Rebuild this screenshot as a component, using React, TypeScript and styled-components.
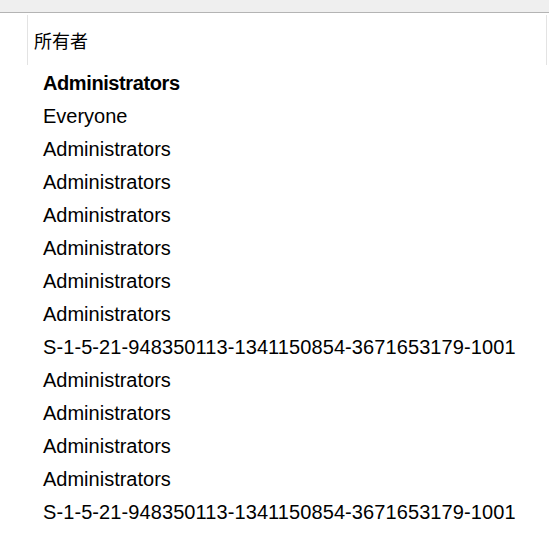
import React from "react";
import styled, { createGlobalStyle } from "styled-components";

const Global = createGlobalStyle`
  html, body { margin: 0; padding: 0; background: #ffffff; }
  body { font-family: "Liberation Sans", "Noto Sans CJK SC", sans-serif; color: #000; }
`;

const Page = styled.div`
  width: 549px;
  height: 539px;
  display: flex;
  flex-direction: column;
  background: #fff;
  overflow: hidden;
`;

const TopBar = styled.div`
  height: 12px;
  background: #efefef;
  border-bottom: 1px solid #b4b4b4;
  flex-shrink: 0;
`;

const HeaderRow = styled.div`
  display: flex;
  padding: 2px 2px 0 27px;
  height: 50px;
  flex-shrink: 0;
`;

const HeaderCell = styled.div`
  flex: 1;
  display: flex;
  align-items: center;
  padding-left: 6px;
  border-left: 1px solid #e3e3e3;
  border-right: 1px solid #e3e3e3;
  font-family: "Noto Sans CJK SC", "Noto Sans", sans-serif;
  font-size: 18px;
  padding-bottom: 1px;
`;

const List = styled.div`
  display: flex;
  flex-direction: column;
  padding: 2px 0 0 43px;
`;

const Item = styled.div<{ $bold?: boolean; $sid?: boolean }>`
  height: 33px;
  line-height: 33px;
  font-size: 20px;
  font-weight: ${(p) => (p.$bold ? 700 : 400)};
  letter-spacing: ${(p) => (p.$bold ? "-0.4px" : p.$sid ? "0.09px" : "0")};
  white-space: nowrap;
`;

const SID = "S-1-5-21-948350113-1341150854-3671653179-1001";

const items = [
  "Administrators",
  "Everyone",
  "Administrators",
  "Administrators",
  "Administrators",
  "Administrators",
  "Administrators",
  "Administrators",
  SID,
  "Administrators",
  "Administrators",
  "Administrators",
  "Administrators",
  SID,
];

export default function App() {
  return (
    <Page>
      <Global />
      <TopBar />
      <HeaderRow>
        <HeaderCell>所有者</HeaderCell>
      </HeaderRow>
      <List>
        {items.map((t, i) => (
          <Item key={i} $bold={i === 0} $sid={t === SID}>
            {t}
          </Item>
        ))}
      </List>
    </Page>
  );
}
